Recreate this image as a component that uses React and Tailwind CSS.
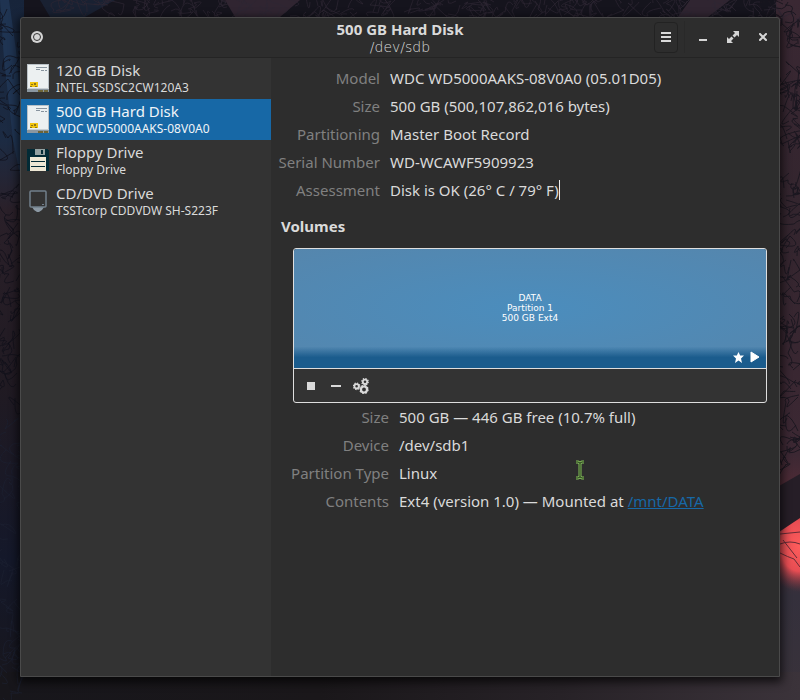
import React from "react";

const drives = [
  { name: "120 GB Disk", model: "INTEL SSDSC2CW120A3", Icon: DiskIcon },
  { name: "500 GB Hard Disk", model: "WDC WD5000AAKS-08V0A0", Icon: DiskIcon, selected: true },
  { name: "Floppy Drive", model: "Floppy Drive", Icon: FloppyIcon },
  { name: "CD/DVD Drive", model: "TSSTcorp CDDVDW SH-S223F", Icon: OpticalIcon },
];

// Twigs of the forest wallpaper, grown from a small seeded generator.
function makeTwigs(seed, count, x0, y0, w, h) {
  let s = seed;
  const rnd = () => {
    s = (s * 16807) % 2147483647;
    return s / 2147483647;
  };
  let d = "";
  for (let i = 0; i < count; i++) {
    const x = Math.round(x0 + rnd() * w);
    const y = Math.round(y0 + rnd() * h);
    const r = () => Math.round((rnd() - 0.5) * 34);
    d += `M${x} ${y}q${r()} ${r()} ${r()} ${r()}q${r()} ${r()} ${r()} ${r()}`;
  }
  return d;
}

const topTwigs = makeTwigs(11, 150, 60, 0, 740, 18);
const leftTwigs = makeTwigs(29, 70, 0, 20, 22, 400);
const rightTwigs = makeTwigs(47, 110, 780, 0, 22, 470);
const lowTwigs = makeTwigs(83, 40, 0, 420, 22, 280);

function Wallpaper() {
  return (
    <svg className="absolute inset-0 h-full w-full" viewBox="0 0 800 700" preserveAspectRatio="none" aria-hidden="true">
      <defs>
        <linearGradient id="leftSky" x1="0" y1="0" x2="0" y2="1">
          <stop offset="0" stopColor="#17243a" />
          <stop offset=".2" stopColor="#1c2b43" />
          <stop offset=".3" stopColor="#2a2029" />
          <stop offset=".55" stopColor="#201a22" />
          <stop offset=".8" stopColor="#14182a" />
          <stop offset="1" stopColor="#18161b" />
        </linearGradient>
        <linearGradient id="rightSky" x1="0" y1="0" x2="0" y2="1">
          <stop offset="0" stopColor="#3a2833" />
          <stop offset=".3" stopColor="#33252e" />
          <stop offset=".65" stopColor="#3c2833" />
          <stop offset=".74" stopColor="#612e39" />
          <stop offset=".85" stopColor="#34303c" />
          <stop offset="1" stopColor="#39323a" />
        </linearGradient>
        <linearGradient id="ground" x1="0" y1="0" x2="1" y2="0">
          <stop offset="0" stopColor="#17161b" />
          <stop offset=".4" stopColor="#1a171a" />
          <stop offset=".7" stopColor="#272227" />
          <stop offset="1" stopColor="#3b333a" />
        </linearGradient>
        <radialGradient id="sun">
          <stop offset="0" stopColor="#ff5d5c" />
          <stop offset=".55" stopColor="#e74d53" />
          <stop offset="1" stopColor="#7d343e" stopOpacity="0" />
        </radialGradient>
      </defs>
      <rect width="800" height="700" fill="#15141d" />
      <rect width="24" height="700" fill="url(#leftSky)" />
      <rect x="776" width="24" height="700" fill="url(#rightSky)" />
      <rect y="672" width="800" height="28" fill="url(#ground)" />
      <path d="M0 0h9l7 50 5 60v70l-8-40L4 60z" fill="#243c5d" opacity=".65" />
      <path d="M225 0h75l-20 17h-45zM690 0h40l-22 17h-30z" fill="#42313f" opacity=".6" />
      <path d="M40 0h75l-30 17H50z" fill="#1d2941" opacity=".6" />
      <ellipse cx="800" cy="546" rx="36" ry="46" fill="url(#sun)" />
      <path d={topTwigs} fill="none" stroke="#2d2733" strokeWidth="1" opacity=".7" />
      <path d={leftTwigs} fill="none" stroke="#100f19" strokeWidth="1" opacity=".7" />
      <path d={rightTwigs} fill="none" stroke="#19161f" strokeWidth="1" opacity=".9" />
      <path d={lowTwigs} fill="none" stroke="#1d2132" strokeWidth="1" opacity=".6" />
      <path d="M779 486l21-12v44l-21 14z" fill="#261e27" />
      <path d="M780 534l20-2M780 544q10-4 20 0M780 553q8 4 14 6l6 8M783 540l14 18" fill="none" stroke="#672d37" strokeWidth="1" />
    </svg>
  );
}

function DiskIcon() {
  return (
    <svg width="22" height="28" viewBox="0 0 22 28" shapeRendering="crispEdges" aria-hidden="true">
      <path fill="#b9c1c7" d="M0 0h22v28H0z" />
      <path fill="#ecf0f1" d="M1 1h20v23H1z" />
      <path fill="#8b97a0" d="M0 24h22v4H0z" />
      <path fill="#c8cfd3" d="M0 24h22v1H0z" />
      <path fill="#88949f" d="M9 3h11v1H9zM9 5h4v1H9zM14 6h3v1h-3zM18 6h2v1h-2z" />
      <path fill="#f1c40f" d="M3 18h8v5H3z" />
      <path fill="#8b7619" d="M4 20h2v1H4zM7 19h2v2H7zM3 22h2v1H3zM8 22h2v1H8z" />
      <path fill="#6e6437" d="M11 26h5v2h-5zM17 26h4v2h-4z" />
    </svg>
  );
}

function FloppyIcon() {
  return (
    <svg width="22" height="22" viewBox="0 0 22 22" shapeRendering="crispEdges" aria-hidden="true">
      <path fill="#032b36" d="M0 0h20l2 2v20H0z" />
      <path fill="#93a1a1" d="M8 0h10v6H8z" />
      <path fill="#032b36" d="M14 1h2v4h-2z" />
      <path fill="#eee8d5" d="M3 8h16v14H3z" />
      <path fill="#032b36" d="M4 12h14v1H4zM4 17h14v1H4z" />
    </svg>
  );
}

function OpticalIcon() {
  return (
    <svg width="22" height="22" viewBox="0 0 22 22" aria-hidden="true">
      <path fill="#8b98a3" d="M5 17h12l-2 3-3 2h-2l-3-2z" />
      <rect x="3" y="1" width="16" height="16" rx="1" fill="#333" stroke="#72808c" strokeWidth="1.5" />
      <path fill="#72808c" d="M15 14h2v1h-2z" />
    </svg>
  );
}

function GearsIcon() {
  const gears = [
    [3.6, 8.3, 2.2, 1.8],
    [12, 3.8, 2.2, 1.8],
    [11, 11.5, 3, 2.2],
  ];
  return (
    <svg width="16" height="16" viewBox="0 0 16 16" aria-hidden="true" fill="none" stroke="#dadada">
      {gears.map(([x, y, r, w]) => {
        const dash = ((r + 1) * Math.PI) / 8;
        return (
          <g key={x}>
            <circle cx={x} cy={y} r={r} strokeWidth={w} />
            <circle cx={x} cy={y} r={r + 1} strokeWidth="1.4" strokeDasharray={`${dash} ${dash}`} />
          </g>
        );
      })}
    </svg>
  );
}

function DetailRow({ label, children }) {
  return (
    <>
      <dt className="flex justify-end text-[#808080]">{label}</dt>
      <dd>{children}</dd>
    </>
  );
}

export default function App() {
  return (
    <div className="relative flex min-h-screen bg-[#15141d] px-5 pt-[17px] pb-[23px] font-['Noto_Sans',sans-serif] text-[15px] leading-5 text-[#dadada]">
      <Wallpaper />
      <main className="relative flex min-w-0 flex-1 flex-col rounded-t-[3px] border border-[#4a4a4a] bg-[#2d2d2d] shadow-[0_3px_10px_2px_rgba(0,0,0,0.7)]">
        <header className="grid h-10 grid-cols-[1fr_auto_1fr] items-center border-b border-[#242424] pb-px">
          <button type="button" aria-label="Window menu" className="ml-2 flex size-4 items-center justify-center">
            <svg width="12" height="12" viewBox="0 0 12 12" aria-hidden="true">
              <circle cx="6" cy="6" r="6" fill="#d5d5d5" />
              <circle cx="6" cy="6" r="3.5" fill="#d5d5d5" stroke="#333" strokeWidth="1" />
            </svg>
          </button>
          <div className="text-center">
            <h1 className="leading-5 font-bold">500 GB Hard Disk</h1>
            <p className="font-['DejaVu_Sans',sans-serif] text-sm leading-4 font-extralight">/dev/sdb</p>
          </div>
          <div className="flex items-center justify-end">
            <button type="button" aria-label="Application menu" className="flex h-[31px] w-6 items-center justify-center rounded-sm border border-[#222]">
              <svg width="10" height="10" viewBox="0 0 10 10" aria-hidden="true">
                <path fill="#dadada" d="M0 0h10v2H0zM0 4h10v2H0zM0 8h10v2H0z" />
              </svg>
            </button>
            <span className="ml-1.5 h-8 w-px bg-[#292929]" />
            <button type="button" aria-label="Minimize" className="ml-2.5 flex size-4 items-center justify-center">
              <svg width="12" height="12" viewBox="0 0 12 12" aria-hidden="true">
                <path fill="#d5d5d5" d="M2 8h8v2H2z" />
              </svg>
            </button>
            <button type="button" aria-label="Maximize" className="ml-3.5 flex size-4 items-center justify-center">
              <svg width="12" height="12" viewBox="0 0 12 12" aria-hidden="true">
                <path fill="#d5d5d5" d="M6 0h6v6l-2-2-2.500 2.500-2-2L8 2zM0 6l2 2 2.500-2.500 2 2L4 10l2 2H0z" />
              </svg>
            </button>
            <button type="button" aria-label="Close" className="mr-2 ml-3.5 flex size-4 items-center justify-center">
              <svg width="8" height="8" viewBox="0 0 8 8" aria-hidden="true">
                <path d="M1 1l6 6M7 1L1 7" stroke="#d5d5d5" strokeWidth="2" strokeLinecap="square" />
              </svg>
            </button>
          </div>
        </header>

        <div className="flex flex-1">
          <nav aria-label="Drives" className="w-[250px] shrink-0 bg-[#333]">
            <ul>
              {drives.map(({ name, model, Icon, selected }) => (
                <li key={name}>
                  <button
                    type="button"
                    aria-current={selected ? "true" : undefined}
                    className={
                      selected
                        ? "flex h-[41px] w-full items-center gap-[7px] bg-[#1768a6] px-1.5 pb-0.5 text-left text-[#f0f4f8]"
                        : "flex h-[41px] w-full items-center gap-[7px] px-1.5 pb-0.5 text-left"
                    }
                  >
                    <Icon />
                    <span className="flex flex-col">
                      <span className="leading-5">{name}</span>
                      <span className="text-xs leading-4">{model}</span>
                    </span>
                  </button>
                </li>
              ))}
            </ul>
          </nav>

          <section className="min-w-0 flex-1 px-2.5 pt-2.5">
            <dl className="grid grid-cols-[99px_1fr] gap-x-2.5 gap-y-2 whitespace-nowrap">
              <DetailRow label="Model">WDC WD5000AAKS-08V0A0 (05.01D05)</DetailRow>
              <DetailRow label="Size">500 GB (500,107,862,016 bytes)</DetailRow>
              <DetailRow label="Partitioning">Master Boot Record</DetailRow>
              <DetailRow label="Serial Number">WD-WCAWF5909923</DetailRow>
              <DetailRow label="Assessment">
                <span className="flex items-center">
                  Disk is OK (26° C / 79° F)
                  <span className="h-5 w-px bg-[#eee]" />
                </span>
              </DetailRow>
            </dl>

            <h2 className="mt-4 font-bold">Volumes</h2>

            <div className="mt-3 mr-0.5 ml-3">
              <div className="overflow-hidden rounded-[3px] border border-[#dedede] bg-[#333]">
                <button
                  type="button"
                  className="relative flex h-[119px] w-full items-center justify-center bg-[linear-gradient(to_bottom,transparent_82%,#1b5c8d_91%),radial-gradient(ellipse_at_center,#4b8dbd,#5586ad)] pb-0.5 text-center font-['DejaVu_Sans',sans-serif] text-[9px] leading-[10px] text-white"
                >
                  <span>
                    DATA
                    <br />
                    Partition 1
                    <br />
                    500 GB Ext4
                  </span>
                  <span className="absolute right-1.5 bottom-[5px] flex items-center gap-1.5">
                    <svg width="11" height="11" viewBox="0 0 11 11" className="mt-0.5" aria-hidden="true">
                      <path fill="#fff" d="M5.500 0l1.700 3.600H11L8 6.500 9 11 5.500 8.600 2 11l1-4.500-3-2.900h3.800z" />
                    </svg>
                    <svg width="10" height="12" viewBox="0 0 10 12" aria-hidden="true">
                      <path fill="#fff" d="M1 1l8 5-8 5z" stroke="#fff" strokeLinejoin="round" />
                    </svg>
                  </span>
                </button>
                <div className="flex h-[34px] items-center gap-[9px] border-t border-[#dedede] px-[9px]">
                  <button type="button" aria-label="Unmount partition" className="flex size-4 items-center justify-center">
                    <span className="size-2 bg-[#dadada]" />
                  </button>
                  <button type="button" aria-label="Delete partition" className="flex size-4 items-center justify-center">
                    <span className="h-0.5 w-2.5 bg-[#dadada]" />
                  </button>
                  <button type="button" aria-label="Partition options" className="flex size-4 items-center justify-center">
                    <GearsIcon />
                  </button>
                </div>
              </div>

              <dl className="mt-1 grid grid-cols-[96px_1fr] gap-x-2.5 gap-y-2 whitespace-nowrap">
                <DetailRow label="Size">500 GB — 446 GB free (10.7% full)</DetailRow>
                <DetailRow label="Device">/dev/sdb1</DetailRow>
                <DetailRow label="Partition Type">Linux</DetailRow>
                <DetailRow label="Contents">
                  Ext4 (version 1.0) — Mounted at{" "}
                  <a href="#data" className="text-[#1768a6] underline">/mnt/DATA</a>
                </DetailRow>
              </dl>
            </div>
          </section>
        </div>
      </main>

      <svg className="pointer-events-none absolute top-[460px] left-[575px]" width="10" height="20" viewBox="0 0 10 20" aria-hidden="true">
        <path d="M1 2h2l2 1 2-1h2M5 3v14M1 18h2l2-1 2 1h2" fill="none" stroke="#84c05a" strokeWidth="3" />
        <path d="M1 2h2l2 1 2-1h2M5 3v14M1 18h2l2-1 2 1h2" fill="none" stroke="#24351c" strokeWidth="1" />
      </svg>
    </div>
  );
}
